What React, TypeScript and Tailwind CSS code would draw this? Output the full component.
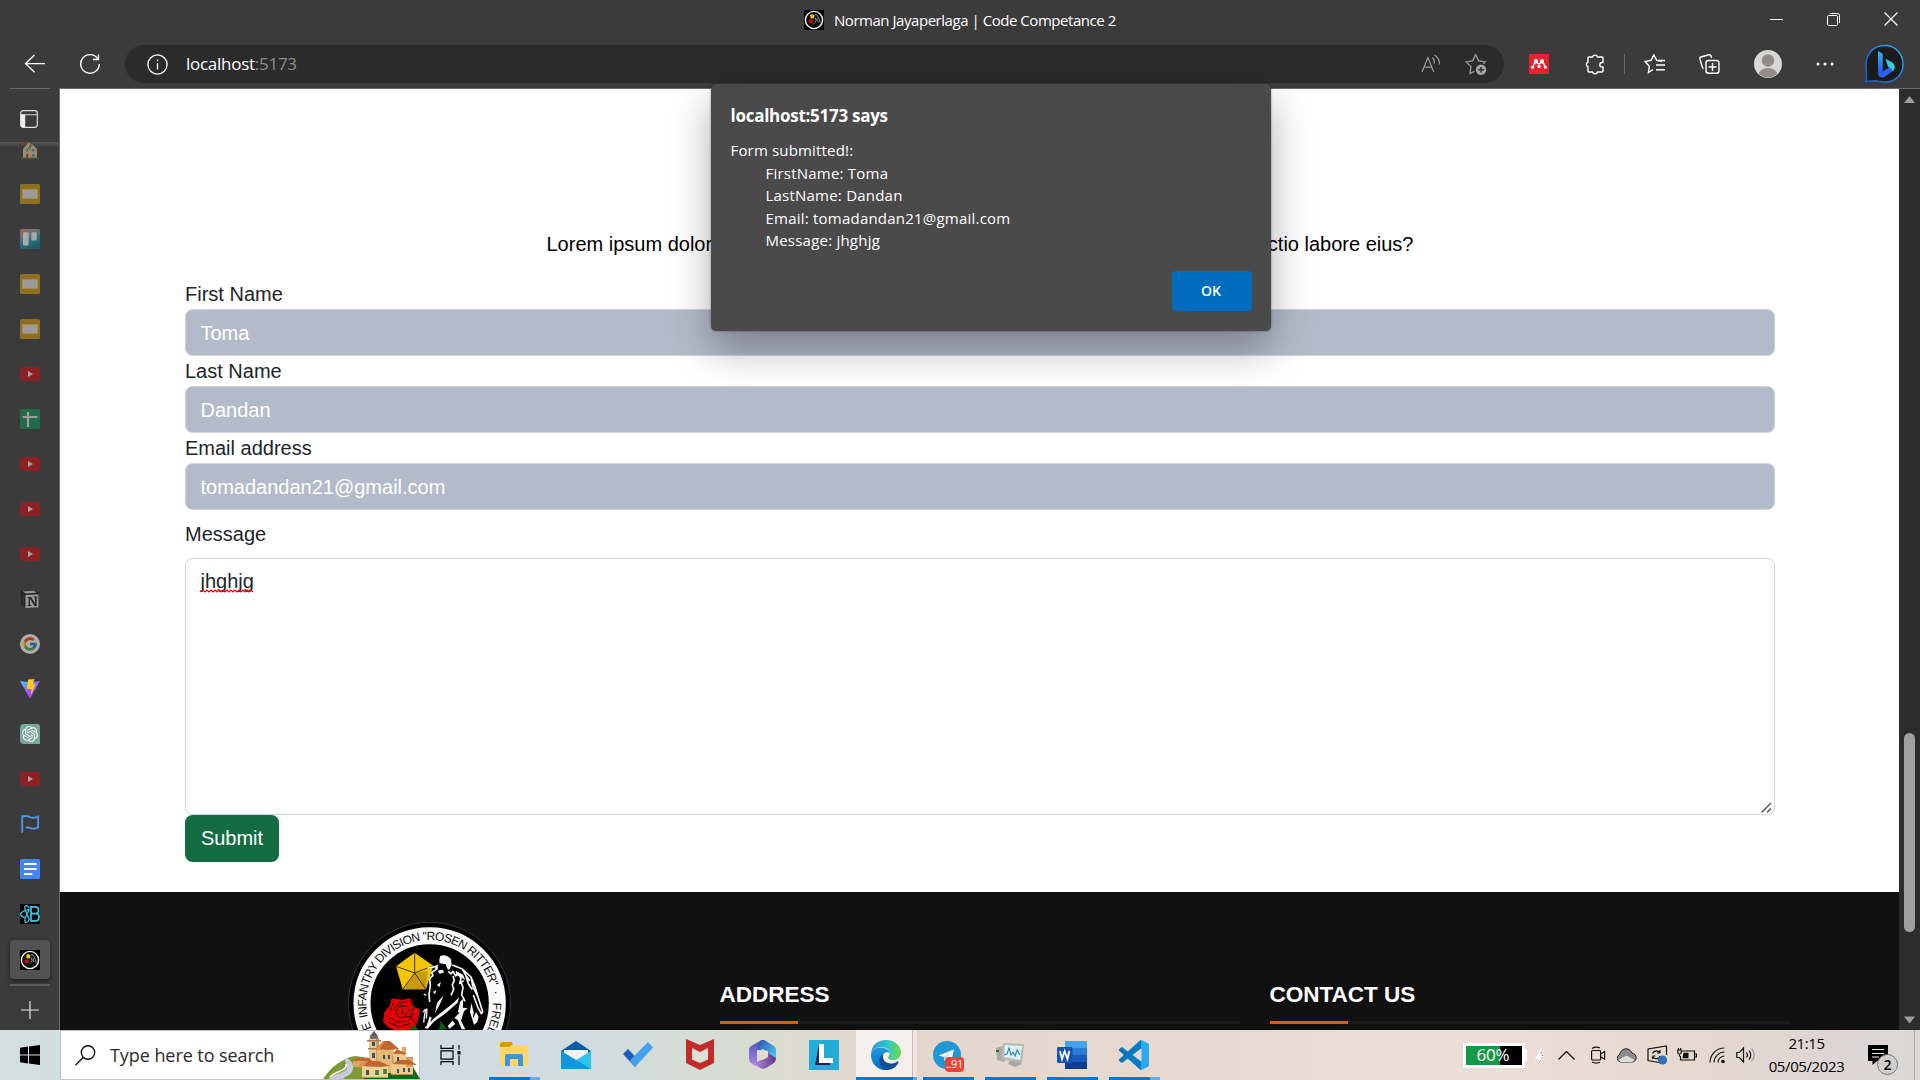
import React from "react";
import { FcGoogle } from "react-icons/fc";
import { SiOpenai } from "react-icons/si";

const UI = "font-['Open_Sans','Noto_Sans',sans-serif]";

/* ---------- shared artwork ---------- */

function DivisionFavicon() {
  return (
    <svg width="20" height="20" viewBox="0 0 20 20" className="shrink-0">
      <rect width="20" height="20" fill="#000" />
      <circle cx="10" cy="10" r="8.6" fill="#0c0c0c" stroke="#f2f2f2" strokeWidth="1.4" />
      <path d="M6 5l2.6-1 2 1.6-1 2.8H6.8z" fill="#f0c80a" />
      <path d="M4.3 10l3.4-.7 1.6 1.6-1.4 2.5-2.8-.4z" fill="#c00d0d" />
      <path d="M11 4.500l2 .6 2.300 4.200 1 3.700M11 7.500l1.200 3-1.400 2M13 8l1 4.200" fill="none" stroke="#8c8c8c" strokeWidth="1" />
      <path d="M8.500 14.200l3-1.200" stroke="#0c660c" strokeWidth="1.200" />
    </svg>
  );
}

function DivisionLogo() {
  return (
    <svg width="163" height="108" viewBox="85 22 489 324" className="block font-['Liberation_Sans',Arial,sans-serif]">
      <circle cx="329.5" cy="266" r="243" fill="#000" stroke="#4c4c4c" strokeWidth="2" />
      <circle cx="330" cy="266" r="203" fill="none" stroke="#fafafa" strokeWidth="51" />
      <path id="ring" d="M184.5 388.1A190 190 0 1 1 475.5 388.1" fill="none" />
      <g fontSize="36" fill="#111">
        <text><textPath href="#ring" startOffset="54">E</textPath></text>
        <text textLength="588" lengthAdjust="spacing"><textPath href="#ring" startOffset="91" textLength="588">INFANTRY DIVISION "ROSEN RITTER"</textPath></text>
        <text><textPath href="#ring" startOffset="693">·</textPath></text>
        <text><textPath href="#ring" startOffset="727">FREE</textPath></text>
      </g>
      <path d="M285 114L341 153 319 224H249L229 155z" fill="#f5c400" />
      <path d="M285 175L324 169 319 224H249z" fill="#c79b0b" />
      <path d="M285 114v61L229 155M285 175L341 153M285 175L249 224M285 175l34 49" fill="none" stroke="#201a00" strokeWidth="2.500" />
      <path d="M216 251l32 4 24-4 12 26 17 8-6 28-8 28-14 5h-50l-20-10-13-16 4-28 15-17z" fill="#e00505" />
      <path d="M222 285l20-22 28-4 14 18-12 28-30 4-14-14 10-18 22-4 10 14-12 14-12-8 4-10M206 304l22 18 36-2 20-24M206 322l30 14 38-10M240 262l8 12M272 305l18 26M222 266l-10 20" fill="none" stroke="#3b0000" strokeWidth="3" />
      <path d="M268 346l16-16 12 16zM358 346l4-28 20 24z" fill="#075c10" />
      <path d="M362 124c10-6 26 0 32 10l2 18-8 14-6-5-4-12-18-3c-2-8-1-14 2-22z" fill="#f7f7f7" />
      <g fill="none" stroke="#f7f7f7" strokeWidth="5" strokeLinejoin="round">
        <path d="M324 160l28-5-4 10M352 150v12l-16 12 4 8-10 10 2 20-4 28 2 22" />
        <path d="M398 151l30 12 26 24 13 32 10 34 12 38-4 6-10-18-14-38M428 163l10 18 12 18M438 181l8 26 12 18M454 187l6 30 14 28" />
        <path d="M386 170l8 8 6-8 8 14 8-8 8 14-4 16 12-8M400 184l4 14-6 12 4 14-8 18M422 196l8 22-4 22 10 20" />
        <path d="M312 238l8 4M310 292l8-8-4 22-2 18M322 282l-2 30" strokeWidth="4" />
      </g>
      <g fill="#f7f7f7">
        <path d="M354 168l14-3 6 8-14 5zM408 168l22 12 7 16-14-8-14-7zM352 210l12-8-5 16zM340 232l10-6-4 13z" />
        <path d="M314 340l30-30 58-46 16-16-4 16-36 32-34 24-20 22zM352 264l20-22-12 28-14 26zM330 305l6 4-10 28-7 4z" />
        <path d="M421 262l10-10-2 34-6 12-8-6zM430 279l14 2-11 9-9 28 13 26h-11l-12-28-10-6 15-15zM408 302l-10 16 9 10-18 14-5-8 15-17z" />
        <path d="M455 265l7 27-2 20 9-20 8 14-4 16-10 9-6-20-6-18z" />
      </g>
    </svg>
  );
}

/* ---------- browser sidebar ---------- */

function Slides() {
  return (
    <svg width="20" height="20" viewBox="0 0 20 20">
      <rect width="20" height="20" rx="1.6" fill="#8f7023" />
      <rect x="2.6" y="5.6" width="14.8" height="8.8" fill="#9b9b9b" stroke="#a98e4f" strokeWidth=".8" />
    </svg>
  );
}
function YouTube() {
  return (
    <svg width="20" height="20" viewBox="0 0 20 20">
      <rect x="0" y="3" width="20" height="14" rx="3.5" fill="#8c2125" />
      <path d="M8 7l5 3-5 3z" fill="#a9a2a2" />
    </svg>
  );
}
function Trello() {
  return (
    <svg width="20" height="20" viewBox="0 0 20 20">
      <defs><linearGradient id="trello" x1="0" y1="0" x2=".4" y2="1"><stop offset="0" stopColor="#a36355" /><stop offset=".45" stopColor="#5b7380" /><stop offset=".7" stopColor="#1f7580" /><stop offset="1" stopColor="#225965" /></linearGradient></defs>
      <rect width="20" height="20" rx="1.5" fill="url(#trello)" />
      <rect x="3" y="3.2" width="5.6" height="13.4" rx="1" fill="#a9a9a9" />
      <rect x="11.4" y="3.2" width="5.4" height="8.3" rx="1" fill="#a9a9a9" />
    </svg>
  );
}
function House() {
  return (
    <svg width="20" height="20" viewBox="0 0 20 20">
      <path d="M3 9l6-7 4 3 4 4v9H3z" fill="#9a8d6e" />
      <path d="M9 2l2 2-3 5M12 5l-3 5M3 5l3-3" stroke="#4a4540" strokeWidth=".8" fill="none" />
      <path d="M4 2h2v3H4z" fill="#7a3436" />
      <path d="M6 9h2v2.500H6zM12 9h2.500v2.500H12zM12 14h2.500v2.400H12z" fill="#4b6e8d" />
      <path d="M6 14h2.500v4H6z" fill="#7b4037" />
      <path d="M1.500 17.500h17v1.200h-17z" fill="#4c6240" />
    </svg>
  );
}
function Sheets() {
  return (
    <svg width="20" height="20" viewBox="0 0 20 20">
      <rect width="20" height="20" rx="1.6" fill="#236b49" />
      <path d="M8 3v15M2.500 8h15" stroke="#9d9d9d" strokeWidth="2.200" />
    </svg>
  );
}
function Notion() {
  return (
    <svg width="20" height="20" viewBox="0 0 20 20">
      <path d="M1 2l13-1 5 3v15H6l-5-4z" fill="#1f1f1f" />
      <path d="M2.500 2.500L13.500 1.600l3.400 2.200-11 .8zM5.400 6l13.200-.8v13.200L5.400 19z" fill="#969696" />
      <path d="M2.400 3.600l2 1.800v11.800l-2-2.400z" fill="#333" />
      <path d="M7.500 8h3.600l4 6.500V8.800L14 8.400V7.600h3.600v.8l-1 .4v8.200h-1.900l-4.800-7.400v6.200l1.300.4v.8H7.700v-.8l1-.4V9l-1.200-.3z" fill="#222" />
    </svg>
  );
}
function Google() {
  return (
    <div className="grid size-5 place-items-center rounded-full bg-white opacity-[.58]"><FcGoogle size={16} /></div>
  );
}
function Vite() {
  return (
    <svg width="20" height="20" viewBox="0 0 20 20">
      <defs><linearGradient id="vite" x1="0" y1="0" x2=".6" y2="1"><stop offset="0" stopColor="#41d1ff" /><stop offset=".5" stopColor="#8d6bff" /><stop offset="1" stopColor="#bd34fe" /></linearGradient></defs>
      <path d="M0 2l10 1.600L20 2 10 19.800z" fill="url(#vite)" />
      <path d="M8 .6L14.500 0l-1.500 5h2.600l-4.600 11.500.4-6.500H6.800z" fill="#ffc71f" />
    </svg>
  );
}
function ChatGpt() {
  return <div className="grid size-5 place-items-center rounded-tl-[4px] rounded-tr-[3px] rounded-bl-[4px] bg-[#75a99b]"><SiOpenai size={16} color="#fff" /></div>;
}
function Flag() {
  return (
    <svg width="20" height="20" viewBox="0 0 20 20" fill="none" stroke="#4e93e6" strokeWidth="1.900">
      <path d="M2.200 1.200v17.600M2.200 3c4-2.200 6.500-.4 8.500.3 2.800.8 5 .5 7.400-.8v11c-3 1.700-5.500 1.500-7.600.6-1.600-.7-3.600-.7-4.700-.2" />
    </svg>
  );
}
function Docs() {
  return (
    <svg width="20" height="20" viewBox="0 0 20 20">
      <rect width="20" height="20" rx="1.6" fill="#4285f4" />
      <path d="M4 5h12.500M4 10h12.500M4 15h8.300" stroke="#fff" strokeWidth="2" />
    </svg>
  );
}
function ReactBootstrap() {
  return (
    <svg width="20" height="20" viewBox="0 0 20 20" fill="none" stroke="#41c6e6" strokeWidth="1.700">
      <rect width="20" height="20" fill="#060606" stroke="none" />
      <path d="M11 2.800h4.500c4 0 4 6.200.5 6.700 4.200.5 4 7.300-.5 7.300H11zM11 9.600h5" />
      <path d="M9.500 4C7 .2 4 1 5 4.800c1 4 4 9.500 4.500 11.400M9.500 15.500C7 19.700 4 19 5 15.200M9.500 5.400C-1.500 7.500-1.500 12 5 13.600M5.200 14.800C6 11.500 8 8 9.500 5" strokeWidth="1.300" />
    </svg>
  );
}

const tabs: React.FC[] = [Slides, Trello, Slides, Slides, YouTube, Sheets, YouTube, YouTube, YouTube, Notion, Google, Vite, ChatGpt, YouTube, Flag, Docs, ReactBootstrap];

function Sidebar() {
  return (
    <aside className="flex h-[942px] w-[60px] shrink-0 flex-col items-center border-r border-[#6b6b6b] bg-[#3b3b3b]">
      <div className="h-px w-10 shrink-0 bg-[#6b6b6b]" />
      <div className="flex h-[53px] w-full shrink-0 items-center justify-center pt-[6px] pr-[1px]">
        <svg width="18" height="18" viewBox="0 0 18 18" fill="none">
          <rect x=".7" y=".7" width="16.600" height="16.600" rx="2.500" stroke="#ddd" strokeWidth="1.200" />
          <path d="M1 4.700h16" stroke="#bbb" strokeWidth="1.200" />
          <path d="M.7 4.500h4.500V17.300H2.500q-1.800 0-1.800-2z" fill="#eee" />
        </svg>
      </div>
      <div className="flex h-[29px] w-full shrink-0 items-start justify-center overflow-hidden bg-linear-to-b from-[#555] to-[#3b3b3b] to-20% pl-px">
        <div className="-mt-[2px]"><House /></div>
      </div>
      {tabs.map((Icon, i) => (
        <div key={i} className="flex h-[45px] shrink-0 items-center justify-center pl-px"><Icon /></div>
      ))}
      <div className="mt-[4px] flex h-[39px] w-10 shrink-0 items-center justify-center rounded-[4px] bg-[#525252] shadow-[0_2px_4px_rgba(0,0,0,.5)]"><DivisionFavicon /></div>
      <div className="mt-[5px] h-[2px] w-10 shrink-0 bg-[#5c5c5c]" />
      <div className="flex flex-1 items-center justify-center pt-[3px]">
        <svg width="18" height="18" viewBox="0 0 18 18" stroke="#e8e8e8" strokeWidth="1.200"><path d="M9 0v18M0 9h18" /></svg>
      </div>
    </aside>
  );
}

/* ---------- browser chrome ---------- */

function TitleBar() {
  return (
    <header className="flex h-[40px] shrink-0 items-start justify-between">
      <div className="w-[804px]" />
      <div className="flex h-10 w-[312px] items-center gap-[10px]">
        <DivisionFavicon />
        <span className={`${UI} text-[15px] tracking-[-0.46px] whitespace-nowrap text-white`}>Norman Jayaperlaga | Code Competance 2</span>
      </div>
      <div className="flex h-[38px] w-[804px] items-center justify-end gap-[44px] pr-[22px]">
        <svg width="13" height="13" viewBox="0 0 13 13" stroke="#fff"><path d="M0 6.500h13" /></svg>
        <svg width="13" height="13" viewBox="0 0 13 13" stroke="#fff" fill="none"><rect x=".5" y="2.500" width="10" height="10" rx="1.200" /><path d="M3 .5h7.500q2 0 2 2V10" /></svg>
        <svg width="14" height="14" viewBox="0 0 14 14" stroke="#fff" strokeWidth="1.200"><path d="M.5.5l13 13M13.500.5l-13 13" /></svg>
      </div>
    </header>
  );
}

function Toolbar() {
  return (
    <div className="flex h-12 shrink-0 items-center">
      <div className="flex w-[125px] items-center gap-[34px] pl-[24px]">
        <svg width="21" height="20" viewBox="0 0 21 20" fill="none" stroke="#fff" strokeWidth="1.400"><path d="M10.500 1L1.500 9.600l9 8.600M1.500 9.600H21" /></svg>
        <svg width="22" height="22" viewBox="0 0 22 22" fill="none" stroke="#fff" strokeWidth="1.400"><path d="M18.700 5.700A9.300 9.300 0 1 0 20.300 11M19.500 1.500v5h-5.500" /></svg>
      </div>
      <div className="flex h-[38px] w-[1379px] items-center rounded-full bg-[#2b2b2b] pr-[17px] pl-[22px]">
        <svg width="21" height="21" viewBox="0 0 21 21" fill="none" stroke="#fff" strokeWidth="1.300"><circle cx="10.500" cy="10.500" r="9.600" /><path d="M10.500 9v6.500M10.500 5.500v1.700" /></svg>
        <span className={`${UI} -mt-px ml-[18px] text-[17px] tracking-[-0.27px] whitespace-nowrap text-white`}>localhost<span className="text-[#8d8d8d]">:5173</span></span>
        <div className="ml-auto flex items-center gap-[24px]">
          <svg width="20" height="20" viewBox="0 0 20 20" fill="none" stroke="#999" strokeWidth="1.200"><path d="M1 18L6.900 3.500 12.800 18M3 13.200h7.800M11.500 3.500c1.600 1.500 2 3.500 1.800 6M13.500 1c4 2.500 5.200 5.500 4.800 9.500" /></svg>
          <svg width="22" height="22" viewBox="0 0 22 22" fill="none" stroke="#999" strokeWidth="1.300"><path d="M9.500 18.300L5 20.300l1-6.600-5-4.800 6.600-1.100L10.700 1.600l3 6.200 6.500 1.100-2 2" /><circle cx="16" cy="16.800" r="5.200" fill="#a5a5a5" stroke="none" /><path d="M16 14v5.600M13.200 16.800h5.600" stroke="#2b2b2b" strokeWidth="1.400" /></svg>
        </div>
      </div>
      <div className="flex flex-1 items-center pl-[25px]">
        <svg width="20" height="20" viewBox="0 0 20 20"><rect width="20" height="20" fill="#e9202f" /><circle cx="7" cy="7" r="2" fill="#fff" /><circle cx="13" cy="7" r="2" fill="#fff" /><path d="M3.500 13.500c1-1 1-4 3-5 1.800-.7 2.500 1.500 3.500 1.500s1.700-2.200 3.500-1.500c2 1 2 4 3 5" fill="none" stroke="#fff" strokeWidth="1.500" /><circle cx="10" cy="12.500" r="1.700" fill="#fff" /><circle cx="3.600" cy="13.300" r="1.500" fill="#fff" /><circle cx="16.400" cy="13.300" r="1.500" fill="#fff" /></svg>
        <svg className="ml-[36px]" width="20" height="21" viewBox="0 0 20 21" fill="none" stroke="#fff" strokeWidth="1.400"><path d="M7.500 3a2.600 2.600 0 0 1 5 0H17q1 0 1 1v4.500h-1a2.100 2.100 0 0 0 0 4.400h1V17q0 1-1 1h-4.500a2.600 2.600 0 0 1-5 0H4q-1 0-1-1v-4.100a2.500 2.500 0 0 1 0-4.700V4q0-1 1-1z" /></svg>
        <div className="ml-[19px] h-[20px] w-px bg-[#6b6b6b]" />
        <svg className="ml-[19px]" width="21" height="20" viewBox="0 0 21 20" fill="none" stroke="#fff" strokeWidth="1.400"><path d="M9 15.500L4.400 18.500l1-6.300L1 7.500l6-1.100L9.900 1l2.800 5.400 5.300.9M12 11h9M12 15.700h9M14 6.500h7" /></svg>
        <svg className="ml-[34px]" width="21" height="20" viewBox="0 0 21 20" fill="none" stroke="#fff" strokeWidth="1.400"><path d="M4.500 14.500Q3.600 14.500 3 12L.9 5q-.3-1.500 1-2L10 .8q1.500-.3 2 1l.6 2" /><rect x="7" y="6.500" width="13" height="12.800" rx="2.500" /><path d="M13.500 9v8M9.500 13h8" /></svg>
        <svg className="ml-[34px]" width="28" height="28" viewBox="0 0 28 28"><clipPath id="avatar"><circle cx="14" cy="14" r="13.500" /></clipPath><circle cx="14" cy="14" r="14" fill="#dad8d6" /><g clipPath="url(#avatar)"><circle cx="14" cy="10.500" r="6.200" fill="#918c88" /><ellipse cx="14" cy="25" rx="9.500" ry="7" fill="#918c88" /></g></svg>
        <svg className="ml-[34px]" width="18" height="4" viewBox="0 0 18 4" fill="#fff"><circle cx="2" cy="2" r="1.500" /><circle cx="9" cy="2" r="1.500" /><circle cx="16" cy="2" r="1.500" /></svg>
        <svg className="ml-[30px]" width="40" height="40" viewBox="0 0 40 40"><defs><linearGradient id="bing" x1="0" y1="1" x2="1" y2="0"><stop stopColor="#1359d8" /><stop offset=".5" stopColor="#1d7cf0" /><stop offset="1" stopColor="#28b9e8" /></linearGradient><linearGradient id="bingb" x1="0" y1="0" x2="0" y2="1"><stop stopColor="#35b8f5" /><stop offset="1" stopColor="#2450f0" /></linearGradient></defs><path d="M2 37.500c.8-4 .5-8 .3-13C.5 11 9 1.500 20.500 1.500S39 10 39 20.500 31 38 20.500 38c-4 0-6-1-9-1.300-3 0-6 .3-9.500.8z" fill="#1b1b1b" stroke="url(#bing)" strokeWidth="1.500" /><path d="M14 7l4.700 2.700v18L14 30.500z" fill="url(#bingb)" /><path d="M14 29.500c0 4 4.500 5 7 3l7-5c3.500-3 2-5.500 1.500-6.500L18 28z" fill="#2c62f3" /><path d="M21.500 14.800l6 3.200c4 2 4 7.500 1 9.500 0-2-.5-2.700-4.500-4.700z" fill="#2fd0df" /></svg>
      </div>
    </div>
  );
}

/* ---------- web page ---------- */

function Field({ label, value }: { label: string; value: string }) {
  return (
    <label className="block">
      <span className="block h-[30px] leading-[30px]">{label}</span>
      <span className="flex h-[47px] items-center rounded-[7.500px] border border-[#ced4da] bg-[#b3bbca] px-[14.500px] text-white">{value}</span>
    </label>
  );
}

function FooterHeading({ children }: { children: React.ReactNode }) {
  return (
    <div className="w-[520px] shrink-0">
      <h5 className="-ml-[0.500px] h-[45px] text-[22.500px] leading-[38px] font-bold whitespace-nowrap text-white">{children}</h5>
      <div className="h-[3px] bg-[#1a1a1a]"><div className="h-full w-[78px] bg-[#dd5a12]" /></div>
    </div>
  );
}

function WebPage() {
  return (
    <main className="h-[941px] w-[1839px] shrink-0 overflow-hidden bg-white font-['Liberation_Sans',Arial,sans-serif] text-[20px] leading-[30px] text-[#212529]">
      <section className="h-[803px] pt-[140px] pr-[124px] pl-[125px]">
        <div className="mx-auto flex h-[50px] w-[867px] items-start justify-between whitespace-nowrap text-black">
          <span>Lorem ipsum dolor</span>
          <span>ctio labore eius?</span>
        </div>
        <Field label="First Name" value="Toma" />
        <Field label="Last Name" value="Dandan" />
        <Field label="Email address" value="tomadandan21@gmail.com" />
        <div className="mt-[9px] leading-[30px]">Message</div>
        <div className="mt-[9px] flex h-[257px] justify-between rounded-[7.500px] border border-[#ced4da] pt-[7px] pl-[14.500px]">
          <div className="h-[30px]">
            <div>jhghjg</div>
            <svg width="54" height="4" viewBox="0 0 54 4" className="-mt-[7px] block" fill="none" stroke="#f00000" strokeWidth="1.200"><path d="M0 3l2-2 2 2 2-2 2 2 2-2 2 2 2-2 2 2 2-2 2 2 2-2 2 2 2-2 2 2 2-2 2 2 2-2 2 2 2-2 2 2 2-2 2 2 2-2 2 2 2-2 2 2" /></svg>
          </div>
          <svg width="11" height="11" viewBox="0 0 11 11" className="mr-[2px] mb-[1px] self-end" stroke="#444" strokeWidth="1.200"><path d="M.5 10.500l9.500-9.500M6 10.500l4-4" /></svg>
        </div>
        <div className="flex h-[47px] w-[94px] items-center justify-center rounded-[7.500px] bg-[#146c43] pb-[2px] text-white">Submit</div>
      </section>
      <footer className="flex h-[138px] bg-[#111] pl-[288px]">
        <div className="w-[372px] shrink-0 pt-[30px]"><DivisionLogo /></div>
        <div className="flex gap-[30px] pt-[84px]">
          <FooterHeading>ADDRESS</FooterHeading>
          <FooterHeading>CONTACT US</FooterHeading>
        </div>
      </footer>
    </main>
  );
}

function Scrollbar() {
  return (
    <div className="flex h-[941px] w-[21px] flex-col items-center bg-[#2c2c2c] pt-[7px] pb-[6px]">
      <svg width="11" height="8" viewBox="0 0 11 8"><path d="M5.500 0L11 7H0z" fill="#9f9f9f" /></svg>
      <div className="mt-[629px] h-[199px] w-[11px] rounded-full bg-[#9f9f9f]" />
      <svg className="mt-auto" width="11" height="8" viewBox="0 0 11 8"><path d="M5.500 7.500L11 .5H0z" fill="#9f9f9f" /></svg>
    </div>
  );
}

function Dialog() {
  return (
    <div className={`${UI} absolute top-[84px] left-[711px] flex h-[247px] w-[560px] flex-col rounded-[5px] bg-[#4a4a4a] px-[19.500px] text-[15px] leading-[22.500px] whitespace-nowrap text-white shadow-[0_0_2px_rgba(0,0,0,.5),0_18px_40px_rgba(0,0,0,.32)]`}>
      <h2 className="mt-[20px] h-[35px] text-[17px] leading-[24px] font-bold tracking-[-0.27px]">localhost:5173 says</h2>
      <p className="tracking-[0.17px]">Form submitted!:</p>
      <div className="pl-[35px] tracking-[0.22px]">
        <p>FirstName: Toma</p>
        <p>LastName: Dandan</p>
        <p>Email: tomadandan21@gmail.com</p>
        <p>Message: jhghjg</p>
      </div>
      <button className="mt-auto mb-[20px] h-[40px] w-[80px] self-end rounded-[4px] bg-[#006cbe] pr-px text-[14px] font-semibold">OK</button>
    </div>
  );
}

/* ---------- taskbar ---------- */

function Castle() {
  return (
    <svg width="97" height="48" viewBox="0 0 97 48" className="block">
      <path d="M0 48C8 36 18 28 32 25l30 4 20 8 15 11z" fill="#7d9b35" />
      <path d="M40 48c14-7 30-8 50-12l7 12z" fill="#0b6a18" />
      <path d="M6 48c4-6 20-6 18-13-1-4-4-6 0-8 5 3 8 8 5 14-2 4-7 4-9 7z" fill="#c9cbdc" />
      <path d="M7 46c5-6 18-6 16-13" stroke="#fff" strokeWidth="1.500" fill="none" />
      <path d="M46 7h10v35H46z" fill="#eec98c" />
      <path d="M53 7h3v35h-3z" fill="#cf9d5c" />
      <path d="M54 18h17v24H54z" fill="#e5b774" />
      <path d="M70 22h13v22H70z" fill="#edc98a" />
      <path d="M79 16h4v8h-4z" fill="#dba964" />
      <path d="M30 30h18v6H30z" fill="#d9a660" />
      <path d="M39 33h26v14H39z" fill="#f0d094" />
      <path d="M68 33h22v11H68z" fill="#edca87" />
      <path d="M83 26h7v10h-7z" fill="#d5a05e" />
      <path d="M51 0l4 5h-8z" fill="#5d5963" /><path d="M47 5h8v3h-8z" fill="#776c6a" />
      <path d="M44 9h14v1.500H44zM45 17h11v1.500H45z" fill="#a9784e" />
      <path d="M53 18l7-8h7l9 8-12 1zM70 23l4-5 10 5zM29 30l5-3h12l3 3zM36 35l6-5h14l11 5-10 1zM70 33l5-4h11l8 5z" fill="#c26530" />
      <path d="M53 18l7-8h2l-5 8M36 35l6-5h3l-4 5" fill="#e58a4c" />
      <path d="M49 11h3v4h-3zM49 22h3v5h-3zM60 24h2v4h-2zM65 24h2v4h-2zM74 26h2v4h-2zM43 39h3v5h-3zM74 38h2v4h-2zM80 37h2v4h-2zM85 37h2v4h-2z" fill="#3b5264" />
      <path d="M52 39h4v5h-4zM60 38h4v5h-4z" fill="#3aa35a" />
      <path d="M54 39v5M62 38v5" stroke="#7b3f27" />
      <path d="M39 46.500h26M68 43.500h22M70 33v-8" stroke="#b27a42" strokeWidth=".8" />
    </svg>
  );
}

function Explorer() {
  return <svg width="28" height="26" viewBox="0 0 28 26"><path d="M0 3Q0 0 2 0h10l1 2-3 3H0z" fill="#dd9a07" /><path d="M0 6h10l3-3h13q2 0 2 2v17q0 2-2 2H2q-2 0-2-2z" fill="#ffd667" /><path d="M5 24V14q0-2 2-2h14q2 0 2 2v10h-5v-7h-8v7z" fill="#3d97dc" /></svg>;
}
function Mail() {
  return <svg width="30" height="28" viewBox="0 0 30 28"><path d="M0 10L15 0l15 10v8H0z" fill="#0a5ca8" /><path d="M3 9h24v8l-12 6L3 17z" fill="#f5f5f5" /><path d="M0 10l15 9 15-9v18H0z" fill="#30c3f2" /><path d="M0 10l30 18H0z" fill="#1893de" /></svg>;
}
function ToDo() {
  return <svg width="30" height="25" viewBox="0 0 30 25"><path d="M0 12l5-5 11.500 12-4.500 6z" fill="#1c5dbe" /><path d="M6.500 19L25 0l5 5.500L12 25z" fill="#43a1ef" /></svg>;
}
function McAfee() {
  return <svg width="28" height="31" viewBox="0 0 28 31"><path d="M0 0l14 6L28 0v24l-14 7L0 24z" fill="#c32b2c" /><path d="M6 9l8 4 8-4v11.500L14 24l-8-3.500z" fill="#dde0d3" /></svg>;
}
function Office() {
  return (
    <svg width="27" height="29" viewBox="0 0 27 29">
      <defs><linearGradient id="o1" x1="0" y1="0" x2="0" y2="1"><stop stopColor="#4a55b8" /><stop offset="1" stopColor="#b388e8" /></linearGradient><linearGradient id="o2" x1="0" y1="0" x2="1" y2=".8"><stop stopColor="#2b4ba8" /><stop offset="1" stopColor="#4cc7f0" /></linearGradient><linearGradient id="o3" x1="0" y1="0" x2="1" y2="0"><stop stopColor="#c194f0" /><stop offset="1" stopColor="#5d3480" /></linearGradient></defs>
      <path d="M11 1L3 5.500Q0 7 0 10v9q0 3 3 5l5 2.500V10l8-9.500Q13-.5 11 1z" fill="url(#o1)" />
      <path d="M11 1q3-2 6 0l7 4.500q3 1.500 3 4.500v9l-8-5v-3L8 10z" fill="url(#o2)" />
      <path d="M3 22.500l8 5.500q3 1.500 6 0l7-4.500q3-2 3-5.500l-8-5v4L8 22q-3 1.500-5 .5z" fill="url(#o3)" />
      <path d="M13.500 9l5.500 3v5l-5.500 3L8.500 17v-5z" fill="#e3dbd2" />
    </svg>
  );
}
function LApp() {
  return <svg width="30" height="30" viewBox="0 0 30 30"><rect width="30" height="30" fill="#22acd8" /><path d="M10 4L6 25h15v-3H11z" fill="#0b2d5c" /><path d="M10 4h5v14h9v5H10z" fill="#fff" /></svg>;
}
function Edge() {
  return (
    <svg width="30" height="30" viewBox="0 0 30 30">
      <defs><linearGradient id="e1" x1="0" y1=".4" x2="1" y2=".5"><stop stopColor="#2497d9" /><stop offset=".5" stopColor="#31c3cf" /><stop offset="1" stopColor="#6bdb4f" /></linearGradient><linearGradient id="e2" x1="0" y1="0" x2="0" y2="1"><stop stopColor="#1d9be0" /><stop offset="1" stopColor="#0a6dc9" /></linearGradient></defs>
      <path d="M0 15C0 5 7 0 15 0c9 0 15 6 15 12.500 0 5-4 7.500-8 7.500-3 0-5-1-5-2.300 0-1 1.500-1.700 1.500-4.200C18.500 9 14 7 10 7 4 7 0 11 0 15z" fill="url(#e1)" />
      <path d="M0 15C0 11 4 7.500 9.500 7.500c5 0 9 2.500 9 5.500-2-1.500-6.500-1-6.500 4 0 6 6 10 10 10-2 2-5 3-8 3C6 30 0 23 0 15z" fill="url(#e2)" />
      <path d="M12 14.500c-1.500 5 3 9 8 9 4 0 5.500-2 7-2 .7 0 .8.700.3 1.500C25 27.500 20.500 30 15.500 30 10 29 8 24 8 20.500c0-3 1.700-5 4-6z" fill="#11509b" />
    </svg>
  );
}
function Telegram() {
  return (
    <div className="relative ml-[-2px]">
      <svg width="28" height="28" viewBox="0 0 28 28"><circle cx="14" cy="14" r="14" fill="#2198d3" /><path d="M5.500 14.500L21 8.500l-3 12-4-3-2.500 2.500-.5-4z" fill="#fff" /><path d="M11 16l7.500-5.500-5.500 6.500-1.500 3z" fill="#b9d4e5" /></svg>
      <span className={`${UI} absolute top-[16px] left-[12px] h-[15px] w-[19px] rounded-[4px] bg-[#ef4138] text-center text-[11px] leading-[14px] tracking-[-0.5px] text-white`}>..91</span>
    </div>
  );
}
function Monitor() {
  return (
    <svg width="28" height="25" viewBox="0 0 28 25">
      <path d="M0 6l7-2 2 16-8-2z" fill="#a9a9a5" /><path d="M0 8h3v2H0z" fill="#262" />
      <path d="M15 17l8 2 3 3-7 3-7-3z" fill="#a8a8a4" />
      <path d="M7 1l21 1-2 19L5 17z" fill="#b9b8b4" /><path d="M9 3l17 1-2 14L8 15z" fill="#ddf1f8" />
      <path d="M8 13l3-1 2-6 2 7 2-3 2 4 2-6 3 5" fill="none" stroke="#2d84b9" strokeWidth="1.100" />
    </svg>
  );
}
function Word() {
  return (
    <svg width="30" height="28" viewBox="0 0 30 28"><path d="M8 0h22v7H8z" fill="#41a5ee" /><path d="M8 7h22v7H8z" fill="#2b7cd3" /><path d="M8 14h22v7H8z" fill="#185abd" /><path d="M8 21h22v7H8z" fill="#103f91" /><rect y="6" width="15.500" height="16" rx="1.300" fill="#1553b0" /><path d="M3 10l2 8 2.700-8 2.700 8 2-8" fill="none" stroke="#fff" strokeWidth="1.800" /></svg>
  );
}
function VsCode() {
  return (
    <svg width="30" height="30" viewBox="0 0 24 24"><defs><linearGradient id="vs" x1="0" x2="1"><stop stopColor="#0873b9" /><stop offset=".72" stopColor="#0a7dc8" /><stop offset=".74" stopColor="#27a9f3" /></linearGradient></defs><path d="M23.150 2.587L18.210.210a1.494 1.494 0 0 0-1.705.290l-9.460 8.630-4.120-3.128a.999.999 0 0 0-1.276.057L.327 7.261A1 1 0 0 0 .326 8.740L3.899 12 .326 15.260a1 1 0 0 0 .001 1.479L1.650 17.940a.999.999 0 0 0 1.276.057l4.120-3.128 9.460 8.630a1.492 1.492 0 0 0 1.704.290l4.942-2.377A1.500 1.500 0 0 0 24 20.060V3.939a1.500 1.500 0 0 0-.850-1.352zm-5.146 14.861L10.826 12l7.178-5.448v10.896z" fill="url(#vs)" /></svg>
  );
}

type App = { icon: React.ReactNode; state?: "open" | "many" | "active" };
const apps: App[] = [
  { icon: <Explorer />, state: "many" },
  { icon: <Mail /> },
  { icon: <ToDo /> },
  { icon: <McAfee /> },
  { icon: <Office /> },
  { icon: <LApp /> },
  { icon: <Edge />, state: "active" },
  { icon: <Telegram />, state: "open" },
  { icon: <Monitor />, state: "open" },
  { icon: <Word />, state: "open" },
  { icon: <VsCode />, state: "many" },
];

function AppButton({ icon, state }: App) {
  const active = state === "active";
  return (
    <div className={`flex h-[50px] w-[62px] flex-col items-center ${active ? "bg-[linear-gradient(90deg,#f5f0ed_56px,#c5bbb5_56px,#c5bbb5_57px,#efe6e1_57px,#efe6e1_61px,transparent_61px)]" : ""}`}>
      <div className="flex h-[47px] items-center justify-center pt-[2px] pr-[2px]">{icon}</div>
      {active && <div className="flex h-[3px] w-[61px] self-start bg-[#0078d7]"><div className="ml-auto w-1 bg-[#5ea6e2]" /></div>}
      {state === "open" && <div className="mr-px h-[3px] w-[51px] bg-[#0078d7]" />}
      {state === "many" && <div className="mr-px flex h-[3px] w-[51px] bg-[#0078d7]"><div className="ml-auto w-[10px] bg-[#66ade6]" /></div>}
    </div>
  );
}

function Tray() {
  return (
    <div className={`${UI} ml-auto flex h-[50px] w-[457px] items-center text-black`}>
      <div className="flex h-[25px] w-[62px] items-center justify-center border-3 border-white bg-[linear-gradient(90deg,#159947_34px,#000_34px)] pr-[2px] text-[17px] tracking-[-0.2px] text-white">60%</div>
      <div className="h-[12px] w-[2px] bg-white" />
      <svg className="ml-[8px]" width="9" height="18" viewBox="0 0 9 18"><path d="M6 0v6l3 5-4 7-1-5H0l5-8z" fill="#fff" /><path d="M6 6l2 5-4 6" fill="none" stroke="#777" strokeDasharray="1.500 1.500" /></svg>
      <svg className="ml-[14px]" width="17" height="9" viewBox="0 0 17 9" fill="none" stroke="#111" strokeWidth="1.300"><path d="M.5 8.500l8-8 8 8" /></svg>
      <svg className="ml-[14px]" width="18" height="18" viewBox="0 0 18 18" fill="none" stroke="#111" strokeWidth="1.200"><rect x="2.600" y="4.500" width="9" height="9.500" rx="1" /><path d="M11.600 8l4-2.500v7.500l-4-2M3 2.500Q7 0 11 2M3 16q4 2 8 .3" /></svg>
      <svg className="ml-[9px]" width="21" height="15" viewBox="0 0 21 15"><path d="M4.500 14a4 4 0 0 1-1-7.500C4.500 3 7 .8 10 .8c3 0 5.200 2 6 4.500 5.500.5 5.500 8 .5 8.700z" fill="#8b8b8b" stroke="#222" strokeWidth="1" /><path d="M2.500 12l8-4.500 8 4.500q-1 2-3 2h-11z" fill="#dedede" /></svg>
      <svg className="ml-[10px]" width="21" height="20" viewBox="0 0 21 20" fill="none" stroke="#111" strokeWidth="1.200"><path d="M12 17.500L1 15.500V4L19.500 1v9" /><path d="M5.500 8.500c1.500-3.500 6-3.500 7.500-.5V5M13 8h-3M13 11c-1 3.500-6 3.500-7.500.5V14M5.500 11h3" /><circle cx="15.500" cy="15" r="4.600" fill="#2f72b9" stroke="none" /></svg>
      <svg className="ml-[9px]" width="20" height="14" viewBox="0 0 20 14" fill="none" stroke="#111" strokeWidth="1.200"><path d="M5 3h12.500v9H3.500V8M17.500 6H19.500v3h-2" /><path d="M6.500 4.800h5v5.500h-6z" fill="#111" stroke="none" /><path d="M.8 2v2.500q0 1.500 1.700 1.500t1.700-1.500V2zM1.500 0v2M3.600 0v2M2.500 6v2.500" /></svg>
      <svg className="ml-[12px]" width="17" height="17" viewBox="0 0 17 17" fill="none" stroke="#222" strokeWidth="1.200"><path d="M1 15.500C1 7.500 7.500 1 15.500 1M5 15.500C5 10 10 5 15.500 5M9 15.500C9 12 12 9 15.500 9" /><circle cx="14" cy="14.500" r="1.800" fill="#111" stroke="none" /></svg>
      <svg className="ml-[10px]" width="20" height="18" viewBox="0 0 20 18" fill="none" stroke="#111" strokeWidth="1.200"><path d="M.8 6.500h2.700l4-4.500v14l-4-4.500H.8zM10.500 6.500q2 2.500 0 5M13 4.500q3.500 4.500 0 9" /><path d="M15.500 2.500q5.500 6.500 0 13" stroke="#999" /></svg>
      <div className="ml-[12px] flex w-[77px] flex-col items-center text-[15px] leading-[23px] tracking-[-0.400px]"><span>21:15</span><span>05/05/2023</span></div>
      <div className="relative ml-[23px] h-[20px] w-[20px]">
        <svg width="20" height="20" viewBox="0 0 20 20"><path d="M0 0h20v16H9l-4.500 4v-4H0z" fill="#000" /><path d="M4 4.500h12M4 8.500h12M4 12h7" stroke="#eee" strokeWidth="1.200" /></svg>
        <span className="absolute top-[9px] left-[9px] flex size-[21px] items-center justify-center rounded-full border border-[#777] bg-[#d0cfce] text-[14px] font-semibold">2</span>
      </div>
      <div className="ml-auto h-full w-px bg-[#aaa]" />
      <div className="w-[5px]" />
    </div>
  );
}

function Taskbar() {
  return (
    <div className="flex h-[50px] w-full shrink-0 items-center bg-[linear-gradient(90deg,#d2dfdf_0%,#cfdde3_24%,#d2dcde_32%,#d5ddd3_37%,#dcdcd0_41%,#e3d6cd_46%,#e6d9d0_60%,#ecdfd7_75%,#e5d9d0_88%,#ded5d3_95%,#d9d8d5_100%)]">
      <div className="flex w-[60px] justify-center"><svg width="20" height="20" viewBox="0 0 20 20"><path d="M0 2.700L8 1.600V9.500H0zM9 1.400L20 0v9.500H9zM0 10.500h8v7.900L0 17.300zM9 10.500h11V20L9 18.600z" /></svg></div>
      <div className="flex h-[50px] w-[360px] items-center border border-[#c3c3c3] bg-white pl-[14px]">
        <svg width="21" height="21" viewBox="0 0 21 21" fill="none" stroke="#111" strokeWidth="1.400"><circle cx="13" cy="7.500" r="6.700" /><path d="M8.300 12.300L.5 20.300" /></svg>
        <span className={`${UI} ml-[14px] text-[18px] tracking-[-0.07px] text-[#2b2b2b]`}>Type here to search</span>
        <div className="-mr-px ml-auto self-end"><Castle /></div>
      </div>
      <div className="flex w-[64px] justify-center pr-[4px]">
        <svg width="21" height="20" viewBox="0 0 21 20" fill="none" stroke="#000" strokeWidth="1.200"><path d="M1 0v3.400h12V0M1 20v-3.400h12V20M1 5.800h12v8.400H1zM19 0v4.500M19 10.500V20" /><path d="M17.500 6h3v3.500h-3z" fill="#000" stroke="none" /></svg>
      </div>
      <div className="flex w-[682px]">{apps.map((a, i) => <AppButton key={i} {...a} />)}</div>
      <Tray />
    </div>
  );
}

export default function App() {
  return (
    <div className="relative flex h-[1080px] w-[1920px] flex-col overflow-hidden bg-[#3b3b3b]">
      <TitleBar />
      <Toolbar />
      <div className="flex h-[942px] shrink-0">
        <Sidebar />
        <div className="flex-1 border-t border-[#6b6b6b]">
          <div className="flex"><WebPage /><Scrollbar /></div>
        </div>
      </div>
      <Taskbar />
      <Dialog />
    </div>
  );
}
